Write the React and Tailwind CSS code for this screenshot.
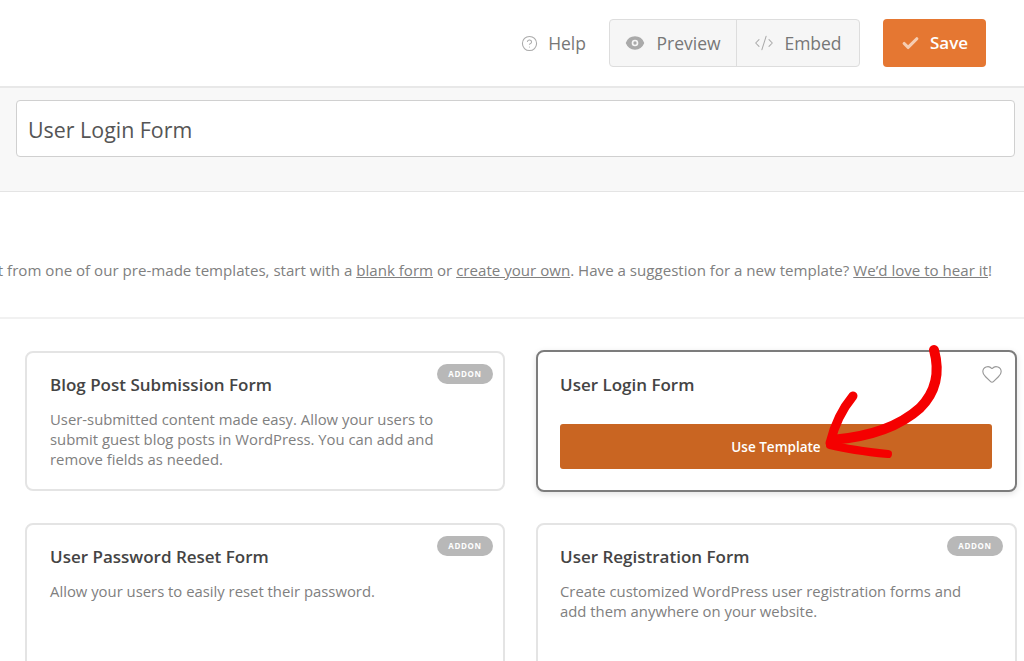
import React from 'react';
import { Check, CircleHelp, CodeXml, Eye, Heart } from 'lucide-react';

const FONT = { fontFamily: '"Open Sans", "Noto Sans", sans-serif' };

const TemplateCard = ({ title, children, pad = 'pl-[23px]', badgePos = 'right-[10px]', className = '' }) => (
  <div className={`relative rounded-[8px] border-2 border-[#e4e4e4] bg-white pt-[20px] ${pad} ${className}`}>
    <span className={`absolute top-[11px] flex h-[20px] w-[56px] items-center justify-center rounded-full bg-[#b8b8b8] text-[8px] font-bold tracking-[0.08em] text-white ${badgePos}`}>
      ADDON
    </span>
    <h3 className="text-[17px] font-semibold leading-[24px] text-[#444]">{title}</h3>
    <p className="mt-[12px] w-[420px] text-[14.85px] leading-[20px] text-[#808080]">{children}</p>
  </div>
);

const App = () => {
  return (
    <div style={FONT} className="relative h-[661px] w-[1024px] overflow-hidden bg-white">
      {/* top bar */}
      <header className="flex h-[88px] items-center justify-end border-b-2 border-[#e8e8e8] pr-[38px]">
        <div className="flex items-center gap-[10px] text-[17.5px] text-[#777]">
          <CircleHelp size={17} strokeWidth={1.5} className="text-[#aaa]" />
          <span>Help</span>
        </div>
        <div className="ml-[23px] flex h-[48px] w-[251px] rounded-[4px] border border-[#ddd] bg-[#f6f6f6] text-[17.5px] text-[#777]">
          <div className="flex w-[127px] items-center justify-center gap-[11px] border-r border-[#ddd]">
            <Eye size={20} fill="#aaa" stroke="#aaa" className="[&>circle]:stroke-[#f6f6f6]" />
            <span>Preview</span>
          </div>
          <div className="flex flex-1 items-center justify-center gap-[10px]">
            <CodeXml size={20} strokeWidth={1.25} className="text-[#aaa]" />
            <span>Embed</span>
          </div>
        </div>
        <button className="ml-[23px] flex h-[48px] w-[103px] items-center justify-center gap-[10px] rounded-[4px] bg-[#e57732] text-[17px] font-semibold text-white">
          <Check size={19} strokeWidth={4} className="text-[#f6cdb2]" />
          Save
        </button>
      </header>

      {/* form name */}
      <section className="h-[104px] border-b border-[#e4e4e4] bg-[#f8f8f8] pl-[16px] pr-[9px] pt-[12px]">
        <div className="flex h-[57px] items-center rounded-[4px] border border-[#d0d0d0] bg-white pl-[11px] pt-[3px] text-[21.4px] text-[#555]">
          User Login Form
        </div>
      </section>

      {/* intro */}
      <div className="flex h-[127px] items-end justify-end border-b-2 border-[#f1f1f1] pb-[37px] pr-[32px]">
        <p className="whitespace-nowrap text-[15.1px] leading-[20px] text-[#808080]">
          To speed up the process you can select from one of our pre-made templates, start with a{' '}
          <span className="underline">blank form</span> or <span className="underline">create your own</span>. Have a suggestion for a new template?{' '}
          <span className="underline">We’d love to hear it</span>!
        </p>
      </div>

      {/* templates */}
      <div className="grid grid-cols-[480px_481px] items-center gap-x-[31px] gap-y-[31px] pl-[25px] pt-[31px]">
        <TemplateCard title="Blog Post Submission Form" className="h-[140px]">
          User-submitted content made easy. Allow your users to submit guest blog posts in WordPress. You can add and remove fields as needed.
        </TemplateCard>

        <div className="relative h-[142px] rounded-[8px] border-2 border-[#7c7c7c] bg-white pl-[22px] pr-[23px] pt-[21px] shadow-[0_2px_6px_rgba(0,0,0,0.12)]">
          <Heart size={22} strokeWidth={1.25} className="absolute right-[12px] top-[11px] text-[#999]" />
          <h3 className="text-[17px] font-semibold leading-[24px] text-[#444]">User Login Form</h3>
          <button className="mt-[27px] flex h-[45px] w-full items-center justify-center rounded-[3px] bg-[#c96522] pt-[2px] text-[13.5px] font-semibold text-white">
            Use Template
          </button>
        </div>

        <TemplateCard title="User Password Reset Form" className="h-[160px]">
          Allow your users to easily reset their password.
        </TemplateCard>
        <TemplateCard title="User Registration Form" pad="pl-[22px]" badgePos="right-[12px]" className="h-[160px]">
          Create customized WordPress user registration forms and add them anywhere on your website.
        </TemplateCard>
      </div>

      {/* hand drawn arrow over the card */}
      <svg className="pointer-events-none absolute left-0 top-0" width="1024" height="661" fill="none" stroke="#f50000" strokeLinecap="round" strokeLinejoin="round">
        <path d="M934 350C940 372 936 392 920 408C899 427 868 437 832 440" strokeWidth="10" />
        <path d="M853 396C843 408 835 423 830 443" strokeWidth="9" />
        <path d="M830 445C850 450 868 452 888 454" strokeWidth="8" />
      </svg>
    </div>
  );
};

export default App;
